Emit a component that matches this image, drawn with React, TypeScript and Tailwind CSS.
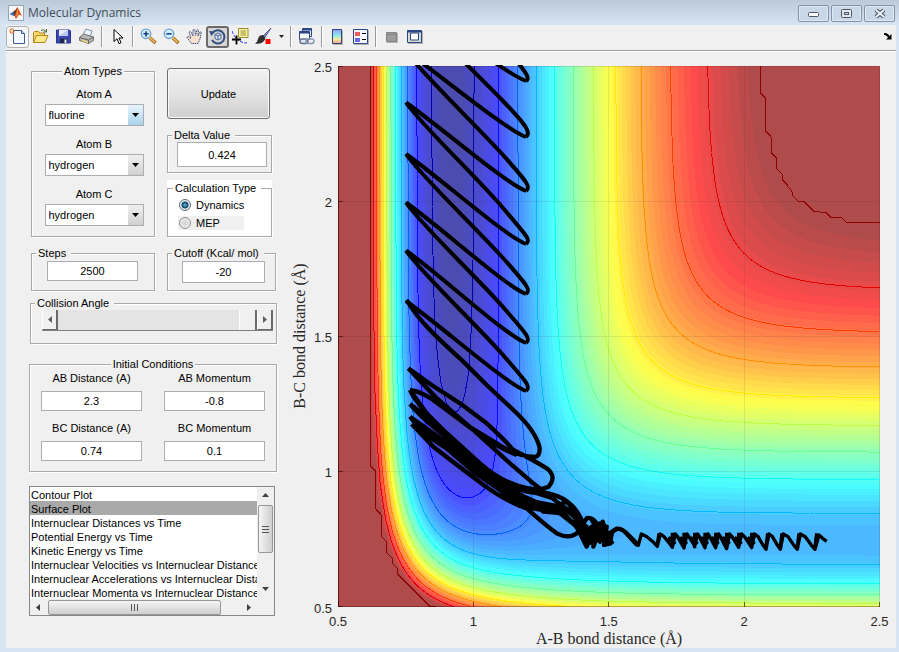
import React, { useMemo, useState } from "react";

/* ---------- London-Eyring-Polanyi-Sato surface for F + H2, collinear ---------- */

type Bond = { d: number; b: number; re: number };
const HF: Bond = { d: 141.2, b: 2.203, re: 0.917 };
const HH: Bond = { d: 109.5, b: 1.942, re: 0.7419 };
const SATO = 0.19;

function integrals(bond: Bond, r: number) {
  const e1 = Math.exp(-bond.b * (r - bond.re));
  const e2 = e1 * e1;
  const k = bond.d / (4 * (1 + SATO));
  return {
    q: k * ((3 + SATO) * e2 - (2 + 6 * SATO) * e1),
    j: k * ((1 + 3 * SATO) * e2 - (6 + 2 * SATO) * e1),
  };
}

function energy(ab: number, bc: number) {
  const a = integrals(HF, ab);
  const b = integrals(HH, bc);
  const c = integrals(HF, ab + bc);
  const s = (a.j - b.j) ** 2 + (b.j - c.j) ** 2 + (a.j - c.j) ** 2;
  return a.q + b.q + c.q - Math.sqrt(s / 2);
}

const CELLS = 100;
const LOW = -141.5;
const CUTOFF = -22.7;
const STEP = 10.39;

const sx = (i: number) => 338 + (i / CELLS) * 541.5;
const sy = (j: number) => 606.5 - (j / CELLS) * 540.5;

function jet(t: number): [number, number, number] {
  const c = (v: number) => Math.max(0, Math.min(1, v));
  const u = 0.06 + t * 3.88;
  return [c(Math.min(u - 1.5, 4.5 - u)), c(Math.min(u - 0.5, 3.5 - u)), c(Math.min(u + 0.5, 2.5 - u))];
}
const toRgb = (c: number[]) => `rgb(${c.map((v) => Math.round(v)).join(",")})`;
const faded = (t: number) => toRgb(jet(t).map((v) => v * 180 + 75));
const pure = (t: number) => toRgb(jet(t).map((v) => v * 255));

type P = [number, number, number];

function buildSurface() {
  const v: number[][] = [];
  for (let j = 0; j <= CELLS; j++) {
    const row: number[] = [];
    for (let i = 0; i <= CELLS; i++) row.push(Math.min(CUTOFF, energy(0.5 + i * 0.02, 0.5 + j * 0.02)));
    v.push(row);
  }
  const corners = (i: number, j: number): P[] => [
    [i, j, v[j][i]],
    [i + 1, j, v[j][i + 1]],
    [i + 1, j + 1, v[j + 1][i + 1]],
    [i, j + 1, v[j + 1][i]],
  ];
  const pt = (x: number, y: number) => `${sx(x).toFixed(1)} ${sy(y).toFixed(1)}`;
  const cross = (a: P, b: P, level: number) => {
    const t = (level - a[2]) / (b[2] - a[2]);
    return pt(a[0] + (b[0] - a[0]) * t, a[1] + (b[1] - a[1]) * t);
  };

  const BANDS = 64;
  const bands: { d: string; fill: string }[] = [];
  for (let k = BANDS - 1; k >= 1; k--) {
    const level = LOW + ((CUTOFF - LOW) * k) / BANDS;
    const d: string[] = [];
    for (let j = 0; j < CELLS; j++) {
      let start = -1;
      for (let i = 0; i <= CELLS; i++) {
        const ps = i < CELLS ? corners(i, j) : [];
        const inside = ps.filter((p) => p[2] <= level).length;
        if (inside === 4) {
          if (start < 0) start = i;
          continue;
        }
        if (start >= 0) {
          d.push(`M${pt(start, j)}L${pt(i, j)}L${pt(i, j + 1)}L${pt(start, j + 1)}Z`);
          start = -1;
        }
        if (inside > 0) {
          const out: string[] = [];
          ps.forEach((a, n) => {
            const b = ps[(n + 1) % 4];
            if (a[2] <= level) out.push(pt(a[0], a[1]));
            if (a[2] <= level !== b[2] <= level) out.push(cross(a, b, level));
          });
          d.push(`M${out.join("L")}Z`);
        }
      }
    }
    bands.push({ d: d.join(""), fill: faded((k - 1) / (BANDS - 1)) });
  }

  const lines: { d: string; stroke: string }[] = [];
  for (let k = 0; k < 12; k++) {
    const level = CUTOFF - 0.001 - k * STEP;
    const d: string[] = [];
    for (let j = 0; j < CELLS; j++)
      for (let i = 0; i < CELLS; i++) {
        const ps = corners(i, j);
        const hits: string[] = [];
        ps.forEach((a, n) => {
          const b = ps[(n + 1) % 4];
          if (a[2] <= level !== b[2] <= level) hits.push(cross(a, b, level));
        });
        if (hits.length >= 2) d.push(`M${hits[0]}L${hits[1]}`);
      }
    lines.push({ d: d.join(""), stroke: pure((level - LOW) / (CUTOFF - LOW)) });
  }
  return { bands, lines };
}

/* Vibrating product: every left turning point feeds two strokes to the right */
const LEFT = [-1, 51, 102.5, 154, 202.5, 250.5, 301];
const RIGHT = [81, 137, 191, 244, 294, 343, 391];

function vibration() {
  const d: string[] = ["M516 60C520 66 532 78 526 81"];
  LEFT.forEach((y, n) => {
    const up = RIGHT[n];
    d.push(`M406 ${y}C440 ${y + 24} 505 ${up - 8} 526 ${up}`);
    const down = RIGHT[n + 1];
    if (down) d.push(`M406 ${y}C420 ${y + 21} 478 ${y + 76} 503 ${down - 36}S531 ${down - 4} 526 ${down}`);
  });
  return d.join("");
}

const TANGLE =
  "M20 -180C60 -110 130 -50 185 0L260 75L340 150Q410 215 419 265Q419 290 405 291Q350 290 290 250L200 195L100 105L25 25" +
  "M25 25L95 75L180 130L260 190Q310 235 340 270Q400 300 440 325Q472 350 446 380Q420 392 385 385Q310 372 240 310L130 210L80 160L30 90" +
  "M30 90Q70 95 120 135L240 225Q300 265 350 285M25 25L110 115L220 210L330 310L400 370L470 425L520 460L560 530" +
  "M30 90Q45 125 100 180L200 280Q280 350 340 375T420 395Q480 405 500 425Q540 460 560 530" +
  "M30 132L100 185L180 260L250 325Q330 380 380 395L470 408Q520 425 545 480L570 555" +
  "M30 132Q60 170 130 225L210 300L280 350L350 400L440 440Q500 440 530 480L560 555" +
  "M30 170L100 220L180 280L250 340L330 395L400 440L480 450L530 500L560 560" +
  "M30 170Q50 200 110 245L200 305L280 370L370 430L450 445L500 425L540 470L585 555" +
  "M35 192L80 220L170 280L240 330L330 385Q380 410 430 455L490 460L520 490L560 540" +
  "M35 192L100 260L180 322L260 382Q330 430 380 445L400 445L480 460L530 500L560 560" +
  "M70 220L140 265L220 335L300 390L360 440M190 265L270 345L350 380L460 415M160 255L240 325L320 375M350 415L480 440" +
  "M380 445Q430 490 470 520Q510 540 535 515L560 475Q575 470 590 490L620 520L638 552" +
  "M520 480L545 510L530 520L560 500L550 540L575 500L560 560L585 500L580 560L600 510L590 545" +
  "M575 480L610 530L600 490L625 545L608 485L632 550L612 555L620 500L600 545L570 510L560 560M585 500L620 550" +
  "M632 550L628 520L650 506Q665 505 680 520L715 555";

const TEETH: [number, number][] = [
  [235, 676], [292, 679], [337, 682], [372, 684], [404, 679], [435, 683], [467, 683],
  [500, 686], [536, 682], [575, 683], [618, 688], [661, 688], [712, 688], [765, 688],
];

function entrance() {
  let d = "M150 672L158 637Q172 622 190 632L228 674L235 676";
  TEETH.slice(1).forEach(([x, y], n) => {
    const px = TEETH[n][0];
    const gap = x - px;
    d += `L${px + 9} 642L${px + gap * 0.45} 650L${x - gap * 0.2} ${y - 12}L${x} ${y}`;
  });
  d += "L777 645L788 655L800 664";
  TEETH.slice(1).forEach(([x, y]) => {
    d += `M${x - 1} ${y}L${x + 5} 640`;
  });
  TEETH.slice(2, 10).forEach(([x]) => {
    d += `M${x} 685L${x} 638M${x - 12} 652L${x + 9} 672`;
  });
  return d;
}

const TICKS = [0.5, 1, 1.5, 2, 2.5];

function SurfacePlot() {
  const { bands, lines } = useMemo(buildSurface, []);
  return (
    <svg viewBox="290 52 606 596" className="block w-full" role="img" aria-label="Potential energy surface">
      <defs>
        <clipPath id="axes">
          <rect x="338" y="65" width="542" height="542" />
        </clipPath>
      </defs>
      <g clipPath="url(#axes)">
        <g shapeRendering="crispEdges">
          <rect x="338" y="66" width="542" height="541" fill={faded(1)} />
          {bands.map((b, i) => (
            <path key={i} d={b.d} fill={b.fill} />
          ))}
          {lines.map((l, i) => (
            <path key={i} d={l.d} stroke={l.stroke} fill="none" />
          ))}
          {TICKS.slice(1, 4).map((t) => {
            const i = (t - 0.5) * 50;
            return <path key={t} d={`M${sx(i)} 66V607M338 ${sy(i)}H880`} stroke="#262626" strokeOpacity="0.1" />;
          })}
        </g>
        <g stroke="#000" fill="none" strokeLinejoin="round">
          <path d={vibration()} strokeWidth="4" />
          <path d={TANGLE} strokeWidth="13" transform="translate(400 360) scale(0.33333)" />
          <path d={entrance()} strokeWidth="10" transform="translate(560 320) scale(0.33333)" />
        </g>
      </g>
      <g shapeRendering="crispEdges" stroke="#300" fill="none">
        <path d="M338.5 66V607" strokeOpacity="0.7" />
        <path d="M338 606.5H880" strokeOpacity="0.35" />
        <path d="M338 66.5H880M879.5 66V607" strokeOpacity="0.12" />
        {TICKS.map((t) => {
          const i = (t - 0.5) * 50;
          return <path key={t} d={`M${sx(i)} 607v-5M338 ${sy(i)}h5`} strokeOpacity="0.6" />;
        })}
      </g>
      <g className="font-['Liberation_Sans',Arial,sans-serif] text-[13px]" fill="#262626">
        {TICKS.map((t) => {
          const i = (t - 0.5) * 50;
          return (
            <React.Fragment key={t}>
              <text x={sx(i)} y="626" textAnchor="middle">{t}</text>
              <text x="332" y={sy(i) + 6} textAnchor="end">{t}</text>
            </React.Fragment>
          );
        })}
      </g>
      <g className="font-['Liberation_Serif','Times_New_Roman',serif] text-[16px]" fill="#262626" textAnchor="middle">
        <text x="609" y="644">A-B bond distance (Å)</text>
        <text transform="translate(305 336) rotate(-90)">B-C bond distance (Å)</text>
      </g>
    </svg>
  );
}

/* ---------- Toolbar ---------- */

function Tool({ label, look = "", children }: { label: string; look?: string; children: React.ReactNode }) {
  return (
    <button aria-label={label} className={`flex h-[22px] w-[23px] shrink-0 items-center justify-center rounded-[3px] ${look}`}>
      <svg className="shrink-0" width="17" height="17" viewBox="0 0 17 17" fill="none">
        {children}
      </svg>
    </button>
  );
}

function Separator() {
  return (
    <span className="flex w-2 shrink-0 justify-center">
      <span className="h-[21px] w-[2px] border-l border-[#9a9a9a] bg-white" />
    </span>
  );
}

function Magnifier({ plus }: { plus?: boolean }) {
  return (
    <>
      <path d="M10 10l5.5 5" stroke="#8a5a1c" strokeWidth="3.4" />
      <path d="M9.5 9.5l5.5 5" stroke="#f0b44c" strokeWidth="2" />
      <circle cx="6" cy="5.8" r="4.7" fill="#d2f2fb" stroke="#6f9fd8" strokeWidth="1.4" />
      <path d={plus ? "M3.4 5.8h5.2M6 3.2v5.2" : "M3.4 5.8h5.2"} stroke="#1c3f80" strokeWidth="1.6" />
    </>
  );
}

function Toolbar() {
  return (
    <div className="flex h-[26px] items-center border-b border-[#a0a0a0] bg-[#f0f0f0] pb-[2px]" role="toolbar">
      <Tool label="New Figure" look="border border-[#b0b0b0] bg-[#f8f8f8]">
        <path d="M4.500 2.500h8l3 3v10h-11z" fill="#f4f8ff" stroke="#3b5a9a" />
        <path d="M12.500 2.500v3h3" fill="#c8d8f4" stroke="#3b5a9a" />
        <path d="M3 0v6M0 3h6M1 1l4 4M5 1L1 5" stroke="#e2602a" />
        <circle cx="3" cy="3" r="1.2" fill="#ffe08a" />
      </Tool>
      <Tool label="Open File">
        <path d="M1.500 14.500v-10l1-1h4l1 1.500h5v3" fill="#f5d66a" stroke="#b08818" />
        <path d="M1.500 14.500l3-7h11.500l-3 7z" fill="#ffe98c" stroke="#b08818" />
        <path d="M9 2.500q3-2 5 1m.5-2.500v3h-3" stroke="#4a6a3a" />
      </Tool>
      <Tool label="Save Figure">
        <path d="M1.500 2h13l1 1v12h-14z" fill="#3948b4" stroke="#28348a" />
        <path d="M4 2h9v6H4z" fill="#e4ecfb" />
        <path d="M4 8l9-6v6z" fill="#b8c8f0" />
        <path d="M5 10.500h7.500V15H5z" fill="#20264a" />
        <path d="M9.500 11.500h2V15h-2z" fill="#e8ecf8" />
      </Tool>
      <Tool label="Print Figure">
        <path d="M5 7l3-6 6 2-2 6z" fill="#eef4ff" stroke="#8090a8" />
        <path d="M1.500 9.500l4-3.500 10 3v3.500l-5 3-9-3z" fill="#b8b8b4" stroke="#707070" />
        <path d="M1.500 9.500l9 2.500 5-3M10.500 12v3.500" stroke="#606060" />
        <path d="M4 12.500l6 2" stroke="#e4d468" strokeWidth="1.500" />
      </Tool>
      <Separator />
      <Tool label="Edit Plot">
        <path d="M5 1.500v12l3-2.800 2 5 2-1-2-4.700h4z" fill="#fff" stroke="#000" />
      </Tool>
      <Separator />
      <Tool label="Zoom In"><Magnifier plus /></Tool>
      <Tool label="Zoom Out"><Magnifier /></Tool>
      <Tool label="Pan">
        <path
          d="M5.500 15.500L1 9.500q0-1.500 2-.5l2 1.500L3 4q.5-1.500 2 0l2 4V2q1-1.500 2 0l.5 5.500L11 2q1.500-1 1.500.5L12 8l2-4q1.500-.5 1.200 1L14 11l-2 4.500z"
          fill="#fbe0cc"
          stroke="#34508e"
          strokeDasharray="1.500 .7"
        />
      </Tool>
      <Tool label="Rotate 3D" look="border-2 border-[#6a6a6a] bg-[#d6d6d6]">
        <path d="M3.500 5A6.600 6.600 0 1 1 3 12" stroke="#34507e" strokeWidth="2" />
        <path d="M0 3l6 .5L2.500 8z" fill="#34507e" />
        <path d="M6 6.500l3-1.500 3 1.500v4L9 12l-3-1.500zM6 6.500L9 8l3-1.500M9 8v4" fill="#dce8fa" stroke="#4a6898" />
      </Tool>
      <Tool label="Data Cursor">
        <path d="M6.500.5h9.500v9H6.500z" fill="#fbf3a4" stroke="#9a8c34" />
        <path d="M8.500 3h5.500M8.500 5h5.500M8.500 7h5.500" stroke="#9a8c34" />
        <path d="M0 3q2 6 6 9t9 3" stroke="#2020ff" strokeDasharray="3 1.500" />
        <path d="M0 11.500h9M4.500 7.500v9" stroke="#000" strokeWidth="1.800" />
      </Tool>
      <Tool label="Brush">
        <path d="M16 0l-8 8 1.500 2z" fill="#7e8cd8" stroke="#404880" strokeWidth=".8" />
        <path d="M8 7q-4 0-5 4-.5 3-3 4.500 6 1 8.500-2T10 9.500z" fill="#303030" />
        <path d="M10.500 11h5v5h-5z" fill="#f00" />
      </Tool>
      <button aria-label="Brush colors" className="flex h-[22px] w-3 shrink-0 items-center justify-center">
        <svg width="5" height="3" viewBox="0 0 5 3"><path d="M0 0h5L2.500 3z" fill="#222" /></svg>
      </button>
      <Separator />
      <Tool label="Link Plot">
        <path d="M4.500.5h9v8h-9z" fill="#e8f0ff" stroke="#2a4684" />
        <path d="M1.500 3.500h10v8h-10z" fill="#f6f9ff" stroke="#2a4684" />
        <path d="M4.500 1.500h9M1.500 4.500h10" stroke="#2a4684" strokeWidth="2" />
        <rect x="2" y="11" width="8" height="4.500" rx="2.200" fill="#dde4f0" stroke="#60708c" strokeWidth="1.500" />
        <rect x="8" y="11" width="8" height="4.500" rx="2.200" stroke="#8898b4" strokeWidth="1.500" />
      </Tool>
      <Separator />
      <Tool label="Insert Colorbar">
        <defs>
          <linearGradient id="bar" x1="0" y1="0" x2="0" y2="1">
            <stop offset="0" stopColor="#9a9af0" />
            <stop offset=".4" stopColor="#8ae8f0" />
            <stop offset=".7" stopColor="#f4ee98" />
            <stop offset="1" stopColor="#f49c8c" />
          </linearGradient>
        </defs>
        <path d="M4 2h10v15H4z" fill="#b4b4b4" />
        <path d="M3.500 1.500h9v14h-9z" fill="url(#bar)" stroke="#2a4684" />
      </Tool>
      <Tool label="Insert Legend">
        <path d="M2 2h15v15H2z" fill="#b4b4b4" />
        <path d="M1.500 1.500h14v14h-14z" fill="#f6f9ff" stroke="#2a4684" />
        <path d="M3 4h5v4H3z" fill="#e85a5a" />
        <path d="M3 10h5v4H3z" fill="#6a6ae8" />
        <path d="M10 5.500h4M10 11.500h4" stroke="#000" />
      </Tool>
      <Separator />
      <Tool label="Hide Plot Tools">
        <path d="M4 5h11v10H4z" fill="#b4b4b4" />
        <path d="M3.500 4.500h10v9h-10z" fill="#9c9c9c" stroke="#848484" />
        <path d="M4 6.500h9" stroke="#848484" />
      </Tool>
      <Tool label="Show Plot Tools">
        <path d="M2 3h15v13H2z" fill="#b4b4b4" />
        <path d="M1.500 2.500h14v12h-14z" fill="#d8dcd0" stroke="#2a4684" />
        <path d="M1 3.500h15" stroke="#2a4684" strokeWidth="2" />
        <path d="M4.500 5h8v7h-8z" fill="#fff" stroke="#2a4684" />
      </Tool>
      <svg className="mr-1 ml-auto" width="8" height="7" viewBox="0 0 8 7">
        <path d="M0 1q3-.5 5 3" stroke="#000" strokeWidth="2" fill="none" />
        <path d="M7.500 1v5.500H2z" fill="#000" />
      </svg>
    </div>
  );
}

/* ---------- Title bar ---------- */

function WindowButton({ label, children }: { label: string; children: React.ReactNode }) {
  return (
    <button
      aria-label={label}
      className="flex h-[17px] w-[31px] items-center justify-center rounded-[2px] border border-[#8592ae] bg-[#c9d7e6] shadow-[inset_0_0_0_1px_#dfe9f4]"
    >
      {children}
    </button>
  );
}

function TitleBar() {
  return (
    <header className="flex h-[25px] items-center bg-linear-to-b from-[#bccad8] to-[#d7e4f2] pt-px pr-1 pl-2">
      <svg width="16" height="16" viewBox="0 0 16 16">
        <path d="M.5.5h15v15H.5z" fill="#f4f6f8" stroke="#98a4b0" />
        <path d="M1.500 9l4-2.500L8 9l-2.500 2z" fill="#3a74b8" />
        <path d="M5.500 6.500Q8 5 9.500 2L8.500 9 6 11z" fill="#6a2a20" />
        <path d="M9.500 2q2 4 4.500 9l-3-1.500L8 14l-1.500-3z" fill="#d8501c" />
        <path d="M9.500 3l.5 6-2 3z" fill="#f49a3c" />
      </svg>
      <h1 className="ml-1 font-['Open_Sans','Segoe_UI',sans-serif] text-[12px] leading-4 text-[#414c5a]">Molecular Dynamics</h1>
      <div className="ml-auto flex gap-[2px]">
        <WindowButton label="Minimize">
          <svg className="mt-[3px]" width="11" height="5"><rect x=".5" y=".5" width="10" height="4" rx="1" fill="#fff" stroke="#4c5468" /></svg>
        </WindowButton>
        <WindowButton label="Maximize">
          <svg width="11" height="9">
            <rect x=".5" y=".5" width="10" height="8" rx="1" fill="#e8e8ec" stroke="#4c5468" />
            <rect x="3.500" y="3.500" width="4" height="2" fill="#c9d7e6" stroke="#4c5468" />
          </svg>
        </WindowButton>
        <WindowButton label="Close">
          <svg width="12" height="9" viewBox="0 0 12 9">
            <path d="M2 1l8 7M10 1L2 8" stroke="#4c5468" strokeWidth="4.200" />
            <path d="M2 1l8 7M10 1L2 8" stroke="#f0f2f6" strokeWidth="2" />
          </svg>
        </WindowButton>
      </div>
    </header>
  );
}

/* ---------- Control panel ---------- */

type GroupProps = { title: string; className?: string; legend?: string; children: React.ReactNode };

function Group({ title, className = "", legend = "ml-1 pr-[5px] bg-[#f0f0f0]", children }: GroupProps) {
  return (
    <fieldset
      className={`min-w-0 border border-[#a9a9a9] shadow-[1px_1px_0_#fff,inset_1px_1px_0_#fff] ${className}`}
    >
      <legend className={`pl-[2px] leading-[13px] ${legend}`}>{title}</legend>
      {children}
    </fieldset>
  );
}

const BOX = "border border-[#abadb3] bg-white text-center outline-none";

function AtomSelect({ name, initial, hot }: { name: string; initial: string; hot?: boolean }) {
  return (
    <label className="flex flex-col gap-[3px] text-center leading-[13px]">
      {name}
      <span className="relative block">
        <select
          defaultValue={initial}
          className="block h-[22px] w-[99px] appearance-none border border-[#abadb3] bg-white pl-[3px] outline-none"
        >
          <option>fluorine</option>
          <option>hydrogen</option>
          <option>chlorine</option>
        </select>
        <span
          className={`pointer-events-none absolute top-px right-px flex h-5 w-[15px] items-center justify-center ${
            hot ? "bg-linear-to-b from-[#e8f5fc] to-[#a8d4ec]" : "bg-linear-to-b from-[#f0f0f0] to-[#d0d0d0]"
          }`}
        >
          <svg width="7" height="4" viewBox="0 0 7 4"><path d="M0 0h7L3.500 4z" /></svg>
        </span>
      </span>
    </label>
  );
}

function Field({ name, value }: { name: string; value: string }) {
  return (
    <label className="flex flex-col gap-[6px] text-center leading-[13px]">
      {name}
      <input defaultValue={value} className={`h-5 w-full ${BOX}`} />
    </label>
  );
}

function Radio({ name, checked, className = "" }: { name: string; checked?: boolean; className?: string }) {
  return (
    <label className={`flex h-[14px] w-[66px] items-center gap-[5px] pl-px ${className}`}>
      <input
        type="radio"
        name="calculation"
        defaultChecked={checked}
        className="m-0 size-3 shrink-0 appearance-none rounded-full border border-[#8e8f8f] bg-[radial-gradient(circle,#d0d0d0,#f8f8f8)] checked:border-[#5a6a74] checked:bg-[radial-gradient(circle,#58c8f0_0,#103c5c_3px,#e8f0f4_4px)]"
      />
      {name}
    </label>
  );
}

const PLOTS = [
  "Contour Plot",
  "Surface Plot",
  "Internuclear Distances vs Time",
  "Potential Energy vs Time",
  "Kinetic Energy vs Time",
  "Internuclear Velocities vs Internuclear Distance",
  "Internuclear Accelerations vs Internuclear Distance",
  "Internuclear Momenta vs Internuclear Distance",
];

function PlotList() {
  const [chosen, setChosen] = useState(1);
  return (
    <div className="mt-[14px] mr-[2px] grid grid-cols-[1fr_17px] border border-[#828790]">
      <ul role="listbox" aria-label="Plot type" className="h-[112px] min-w-0 overflow-hidden bg-white">
        {PLOTS.map((name, i) => (
          <li
            key={name}
            role="option"
            aria-selected={i === chosen}
            onClick={() => setChosen(i)}
            className={`h-[14px] overflow-hidden pl-px leading-[16px] whitespace-nowrap ${i === chosen ? "bg-[#a9a9a9]" : ""}`}
          >
            {name}
          </li>
        ))}
      </ul>
      <div className="flex flex-col items-center bg-[#f0f0f0] pt-[2px]">
        <svg className="my-1" width="7" height="4" viewBox="0 0 7 4"><path d="M0 4h7L3.500 0z" fill="#404040" /></svg>
        <div className="mt-1 flex h-12 w-[15px] flex-col items-center justify-center gap-px rounded-[2px] border border-[#979797] bg-linear-to-r from-[#f5f5f5] to-[#cfcfcf]">
          <i className="h-px w-[7px] bg-[#555]" />
          <i className="mt-px h-px w-[7px] bg-[#555]" />
          <i className="mt-px h-px w-[7px] bg-[#555]" />
        </div>
        <svg className="mt-auto mb-2" width="7" height="4" viewBox="0 0 7 4"><path d="M0 0h7L3.500 4z" fill="#404040" /></svg>
      </div>
      <div className="flex h-4 items-center bg-[#f0f0f0] px-[6px]">
        <svg width="4" height="7" viewBox="0 0 4 7"><path d="M4 0v7L0 3.500z" fill="#404040" /></svg>
        <div className="ml-[8px] flex h-[15px] w-[173px] items-center justify-center gap-[2px] rounded-[2px] border border-[#979797] bg-linear-to-b from-[#f5f5f5] to-[#cfcfcf]">
          <i className="h-[7px] w-px bg-[#555]" />
          <i className="h-[7px] w-px bg-[#555]" />
          <i className="h-[7px] w-px bg-[#555]" />
        </div>
        <svg className="ml-auto" width="4" height="7" viewBox="0 0 4 7"><path d="M0 0v7l4-3.500z" fill="#404040" /></svg>
      </div>
      <div className="bg-[#f0f0f0]" />
    </div>
  );
}

function StepButton({ label, path }: { label: string; path: string }) {
  return (
    <button
      aria-label={label}
      className="flex w-4 items-center justify-center border-r-2 border-b border-l border-r-[#696969] border-b-[#696969] border-l-white bg-[#f0f0f0]"
    >
      <svg width="4" height="7" viewBox="0 0 4 7"><path d={path} fill="#606060" /></svg>
    </button>
  );
}

function Controls() {
  return (
    <form className="w-[284px] shrink-0 pt-[13px] pr-[13px] pl-[23px]" onSubmit={(e) => e.preventDefault()}>
      <div className="flex gap-3 pl-[2px]">
        <Group title="Atom Types" legend="mx-auto pr-[2px] bg-[#f0f0f0]" className="h-[172px] w-[124px]">
          <div className="flex flex-col items-center gap-3 pt-[10px] pl-[2px]">
            <AtomSelect name="Atom A" initial="fluorine" hot />
            <AtomSelect name="Atom B" initial="hydrogen" />
            <AtomSelect name="Atom C" initial="hydrogen" />
          </div>
        </Group>
        <div className="w-[105px]">
          <button className="mt-[3px] block h-[51px] w-[103px] rounded-[3px] border border-[#707070] bg-linear-to-b from-[#f2f2f2] from-0% via-[#e4e4e4] via-50% to-[#cfcfcf] to-100% pt-px shadow-[inset_0_0_0_1px_#f8f8f8]">
            Update
          </button>
          <Group title="Delta Value" className="mt-[10px] h-11">
            <input aria-label="Delta Value" defaultValue="0.424" className={`ml-[9px] block h-[25px] w-[90px] ${BOX}`} />
          </Group>
          <div className="mt-[7px] bg-white pt-[2px]">
            <Group title="Calculation Type" legend="ml-[5px] pr-[5px] bg-white" className="h-[55px]">
              <div className="flex flex-col gap-1 pt-[3px] pl-[10px]">
                <Radio name="Dynamics" checked />
                <Radio name="MEP" className="bg-[#f0f0f0]" />
              </div>
            </Group>
          </div>
        </div>
      </div>

      <div className="mt-[10px] flex gap-3 pl-[2px]">
        <Group title="Steps" className="h-[44px] w-[124px]">
          <input aria-label="Steps" defaultValue="2500" className={`mt-px ml-[15px] block h-5 w-[91px] ${BOX}`} />
        </Group>
        <Group title="Cutoff (Kcal/ mol)" className="h-[44px] w-[109px]">
          <input aria-label="Cutoff" defaultValue="-20" className={`mt-px ml-[14px] block h-[22px] w-[83px] ${BOX}`} />
        </Group>
      </div>

      <Group title="Collision Angle" className="mt-[6px] ml-px h-[47px]">
        <div className="mr-[3px] ml-[11px] flex h-[21px] border-b border-[#808080]">
          <StepButton label="Decrease angle" path="M4 0v7L0 3.500z" />
          <input
            type="range"
            aria-label="Collision Angle"
            min="0"
            max="180"
            defaultValue="180"
            className="h-5 min-w-0 flex-1 appearance-none bg-[#e4e4e4] [&::-webkit-slider-thumb]:h-5 [&::-webkit-slider-thumb]:w-[18px] [&::-webkit-slider-thumb]:appearance-none [&::-webkit-slider-thumb]:border-r-2 [&::-webkit-slider-thumb]:border-l [&::-webkit-slider-thumb]:border-r-[#696969] [&::-webkit-slider-thumb]:border-l-white [&::-webkit-slider-thumb]:bg-[#f0f0f0]"
          />
          <StepButton label="Increase angle" path="M0 0v7l4-3.500z" />
        </div>
      </Group>

      <Group title="Initial Conditions" legend="mx-auto pr-[2px] bg-[#f0f0f0]" className="mt-[14px] h-[114px]">
        <div className="grid grid-cols-2 gap-x-[22px] gap-y-[11px] px-[11px] pt-px">
          <Field name="AB Distance (A)" value="2.3" />
          <Field name="AB Momentum" value="-0.8" />
          <Field name="BC Distance (A)" value="0.74" />
          <Field name="BC Momentum" value="0.1" />
        </div>
      </Group>

      <PlotList />
    </form>
  );
}

export default function App() {
  return (
    <div className="flex min-h-screen flex-col bg-[#d7e4f2] font-['Liberation_Sans',Arial,sans-serif] text-[11px] text-black">
      <TitleBar />
      <div className="mr-[3px] mb-1 ml-[6px] flex-1 bg-[#f0f0f0]">
        <Toolbar />
        <main className="flex border-t border-white">
          <Controls />
          <section className="min-w-0 flex-1">
            <SurfacePlot />
          </section>
        </main>
      </div>
    </div>
  );
}
